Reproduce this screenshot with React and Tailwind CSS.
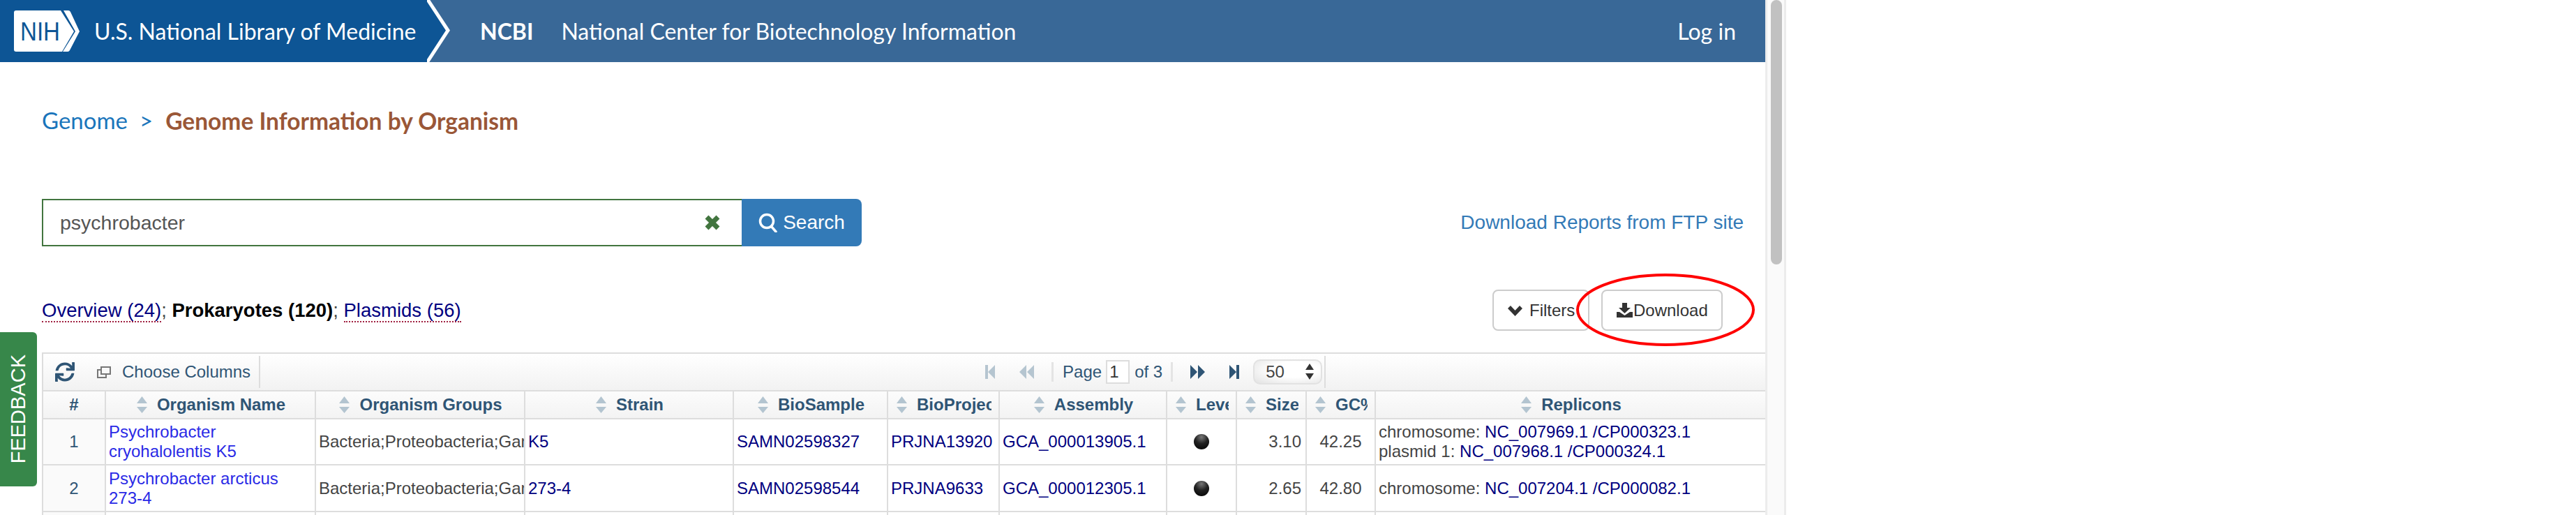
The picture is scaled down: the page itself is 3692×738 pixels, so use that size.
import React from "react";
import { FaSync } from "react-icons/fa";

const COLS =
  "grid grid-cols-[90px_301px_300px_299px_221px_160px_240px_100px_100px_99px_1fr]";

const headers = [
  "Organism Name",
  "Organism Groups",
  "Strain",
  "BioSample",
  "BioProject",
  "Assembly",
  "Level",
  "Size",
  "GC%",
  "Replicons",
];

const rows = [
  {
    n: 1,
    name: "Psychrobacter cryohalolentis K5",
    strain: "K5",
    sample: "SAMN02598327",
    project: "PRJNA13920",
    assembly: "GCA_000013905.1",
    size: "3.10",
    gc: "42.25",
    replicons: [
      ["chromosome:", "NC_007969.1", "CP000323.1"],
      ["plasmid 1:", "NC_007968.1", "CP000324.1"],
    ],
  },
  {
    n: 2,
    name: "Psychrobacter arcticus 273-4",
    strain: "273-4",
    sample: "SAMN02598544",
    project: "PRJNA9633",
    assembly: "GCA_000012305.1",
    size: "2.65",
    gc: "42.80",
    replicons: [["chromosome:", "NC_007204.1", "CP000082.1"]],
  },
];

// sort arrows in the table head
const SortIcon = () => (
  <svg width="15" height="24" viewBox="0 0 15 24" className="shrink-0 text-[#b3c4d0]" fill="currentColor">
    <path d="M7.5 0 15 10H0z" />
    <path d="M0 15h15l-7.5 9z" />
  </svg>
);

const PagerIcon = ({ d, width, className }) => (
  <svg width={width} height="20" viewBox={`0 0 ${width} 20`} className={className} fill="currentColor">
    <path d={d} />
  </svg>
);

const NihLogo = () => (
  <svg width="94" height="60" viewBox="0 0 94 60" className="shrink-0">
    <path d="M3 0H67L86 30 69 59H3Q0 59 0 56V3Q0 0 3 0Z" fill="#fff" />
    <path d="M71 0H78Q80 0 81 2L94 30 80 57Q79 59 77 59H70L88 30Z" fill="#fff" />
    <text x="9" y="43" textLength="57" lengthAdjust="spacingAndGlyphs" fontSize="36" fill="#0d5595" fontFamily="'Liberation Sans', sans-serif">
      NIH
    </text>
  </svg>
);

const Cell = ({ children, className = "" }) => (
  <div className={`border-r-2 border-[#ddd] px-1 flex items-center overflow-hidden min-w-0 ${className}`}>
    {children}
  </div>
);

const Row = ({ row, height }) => (
  <div className={`${COLS} ${height} border-b-2 border-[#ddd]`}>
    <Cell className="justify-center text-[#2f5575] bg-[#fafafa]">{row.n}</Cell>
    <Cell className="text-[#2a2ae6]">{row.name}</Cell>
    <Cell className="whitespace-nowrap text-[#444]">Bacteria;Proteobacteria;Gammaproteobacteria</Cell>
    <Cell className="text-[#000080]">{row.strain}</Cell>
    <Cell className="text-[#000080]">{row.sample}</Cell>
    <Cell className="text-[#000080]">{row.project}</Cell>
    <Cell className="text-[#000080]">{row.assembly}</Cell>
    <Cell className="justify-center">
      <span className="w-[22px] h-[22px] rounded-full bg-[radial-gradient(circle_at_50%_20%,#777_0%,#222_45%,#000_100%)]"></span>
    </Cell>
    <Cell className="justify-end text-[#444] pr-[6px]">{row.size}</Cell>
    <Cell className="justify-center text-[#444]">{row.gc}</Cell>
    <div className="px-1 flex flex-col justify-center text-[#444]">
      {row.replicons.map((r) => (
        <div key={r[1]} className="whitespace-nowrap">
          {r[0]} <span className="text-[#000080]">{r[1]} /{r[2]}</span>
        </div>
      ))}
    </div>
  </div>
);

export default function App() {
  return (
    <div className="relative flex h-[738px] overflow-hidden bg-white font-['Liberation_Sans',Arial,sans-serif]">
      <div className="w-[2530px] shrink-0">
        {/* NLM / NCBI banner */}
        <header className="flex h-[89px] bg-[#396897] text-white font-['Lato',sans-serif]">
          <div className="flex w-[612px] items-center bg-[#0d5595] pl-[20px]">
            <NihLogo />
            <span className="ml-[21px] whitespace-nowrap text-[32px]">U.S. National Library of Medicine</span>
          </div>
          <svg width="34" height="89" viewBox="0 0 34 89" className="shrink-0">
            <path d="M-1 0 30 43.5-1 89H-1Z" fill="#0d5595" />
            <path d="M0 -2 30 43.5 -1 91" fill="none" stroke="#fff" strokeWidth="5" />
          </svg>
          <div className="ml-[42px] flex flex-1 items-center text-[32px]">
            <span className="font-bold">NCBI</span>
            <span className="ml-[40px]">National Center for Biotechnology Information</span>
            <span className="ml-auto mr-[42px]">Log in</span>
          </div>
        </header>

        {/* breadcrumb */}
        <div className="mt-[64px] flex h-[40px] items-center pl-[60px] text-[33px] font-['Lato',sans-serif]">
          <span className="text-[#1a75bb]">Genome</span>
          <span className="ml-[17px] text-[#1a75bb]">&gt;</span>
          <span className="ml-[18px] text-[33.5px] font-bold text-[#9a5737]">Genome Information by Organism</span>
        </div>

        {/* search */}
        <div className="mt-[92px] flex items-center justify-between pl-[60px] pr-[31px]">
          <div className="flex h-[68px] w-[1175px]">
            <div className="flex flex-1 items-center border-2 border-r-0 border-[#42753f] pl-[24px] pr-[30px] text-[28.5px] text-[#555]">
              <span>psychrobacter</span>
              <svg width="24" height="24" viewBox="0 0 24 24" className="ml-auto">
                <path d="M4 4 20 20M20 4 4 20" stroke="#42753f" strokeWidth="7" />
              </svg>
            </div>
            <button className="flex w-[172px] items-center justify-center gap-[8px] rounded-r-lg bg-[#337ab7] text-[28px] text-white">
              <svg width="27" height="28" viewBox="0 0 27 28" fill="none" stroke="#fff" strokeWidth="3.5">
                <circle cx="12" cy="12" r="9.5" />
                <path d="M18.5 19.5 25 27" strokeLinecap="round" />
              </svg>
              Search
            </button>
          </div>
          <a className="text-[28px] text-[#337ab7]">Download Reports from FTP site</a>
        </div>

        {/* tabs and buttons */}
        <div className="mt-[62px] flex h-[59px] items-center pl-[60px] pr-[61px] text-[27.5px] text-[#444]">
          <span>
            <a className="border-b-2 border-dotted border-[#a02040] text-[#000080]">Overview (24)</a>;{" "}
            <b className="text-black">Prokaryotes (120)</b>;{" "}
            <a className="border-b-2 border-dotted border-[#a02040] text-[#000080]">Plasmids (56)</a>
          </span>
          <button className="ml-auto flex h-full w-[139px] items-center gap-[10px] rounded-lg border-2 border-[#ccc] pl-[20px] text-[24px] text-[#333]">
            <svg width="21" height="16" viewBox="0 0 21 16" fill="none" stroke="#333" strokeWidth="5.500">
              <path d="M2 3 10.500 12 19 3" />
            </svg>
            Filters
          </button>
          <button className="ml-[17px] flex h-full w-[174px] items-center rounded-lg border-2 border-[#ccc] pl-[20px] text-[24px] text-[#333]">
            <svg width="23" height="21" viewBox="0 0 23 21" fill="#333" className="mr-[1px]">
              <path d="M8 0h7v7h5l-8.500 8L3 7h5z" />
              <path d="M0 13h4l7.500 5 7.500-5h4v8H0z" />
            </svg>
            Download
          </button>
        </div>

        {/* genome table */}
        <div className="mt-[31px] ml-[60px] border-l-2 border-t-2 border-[#ddd] text-[24px] leading-[28px]">
          <div className="flex h-[54px] items-center border-b-2 border-[#ddd] bg-gradient-to-b from-[#fff] to-[#f2f2f2] text-[#2f5575]">
            <FaSync className="ml-[17px] h-[28px] w-[28px]" />
            <svg width="20" height="17" viewBox="0 0 20 17" className="ml-[32px] text-[#777]" fill="none" stroke="currentColor" strokeWidth="2">
              <rect x="6" y="1" width="13" height="10" />
              <path d="M5 5H1v11h12v-4" />
            </svg>
            <span className="ml-[16px]">Choose Columns</span>
            <span className="ml-[12px] h-[46px] w-[2px] bg-[#ddd]"></span>

            <PagerIcon width={14} d="M0 0h4v20H0zM14 0v20L4 10z" className="ml-[1039px] text-[#b5c5d0]" />
            <PagerIcon width={21} d="M10 0v20L0 10zM21 0v20L11 10z" className="ml-[35px] text-[#b5c5d0]" />
            <span className="ml-[25px] h-[28px] w-[3px] bg-[#e4e4e4]"></span>
            <span className="ml-[13px]">Page</span>
            <span className="ml-[6px] flex h-[34px] w-[34px] items-center border-2 border-[#ddd] bg-white pl-[3px] text-[#333]">1</span>
            <span className="ml-[7px]">of 3</span>
            <span className="ml-[12px] h-[28px] w-[3px] bg-[#e4e4e4]"></span>
            <PagerIcon width={21} d="M0 0v20l10-10zM11 0v20l10-10z" className="ml-[25px]" />
            <PagerIcon width={14} d="M0 0v20l10-10zM10 0h4v20h-4z" className="ml-[35px]" />
            <div className="ml-[20px] flex h-[36px] w-[99px] items-center rounded-[10px] border-2 border-[#e2e2e2] bg-[radial-gradient(ellipse_at_60%_40%,#fff_40%,#e2e2e2_100%)] pl-[16px] text-[#444]">
              50
              <svg width="14" height="24" viewBox="0 0 14 24" fill="#333" className="ml-auto mr-[9px]">
                <path d="M7 0l6 9H1zM1 14h12l-6 9z" />
              </svg>
            </div>
            <span className="ml-[3px] h-[46px] w-[2px] bg-[#ddd]"></span>
          </div>

          <div className={`${COLS} h-[40px] border-b-2 border-[#ddd] bg-gradient-to-b from-[#fcfcfc] to-[#f3f3f3] font-bold text-[#2f5575]`}>
            <Cell className="justify-center">#</Cell>
            {headers.map((h, i) => (
              <div key={h} className={`${i < headers.length - 1 ? "border-r-2 border-[#ddd]" : ""} flex min-w-0 items-center pl-[12px] pr-[10px]`}>
                <div className="flex min-w-0 flex-1 items-center [justify-content:safe_center] gap-[14px] overflow-hidden whitespace-nowrap">
                  <SortIcon />
                  <span className="shrink-0">{h}</span>
                </div>
              </div>
            ))}
          </div>

          <Row row={rows[0]} height="h-[66px]" />
          <Row row={rows[1]} height="h-[67px]" />
          <div className={`${COLS} h-[60px]`}>
            <Cell className="bg-[#fafafa]" />
            {headers.slice(0, -1).map((h) => (
              <Cell key={h} />
            ))}
          </div>
        </div>
      </div>

      {/* page scrollbar */}
      <div className="h-full w-[30px] shrink-0 border-x-[3px] border-[#ececec] bg-[#fafafa] pl-[5px]">
        <div className="h-[379px] w-[16px] rounded-b-lg rounded-t-lg bg-[#c1c1c1]"></div>
      </div>

      {/* feedback tab */}
      <div className="absolute left-0 top-[476px] flex h-[221px] w-[53px] items-center justify-center rounded-r-md bg-[#37874a] text-[29px] text-white">
        <span className="rotate-180 [writing-mode:vertical-rl]">FEEDBACK</span>
      </div>

      {/* red annotation round the Download button */}
      <svg width="260" height="108" viewBox="0 0 260 108" fill="none" className="absolute left-[2257px] top-[390px]">
        <ellipse cx="130" cy="54" rx="126" ry="50" stroke="#f00" strokeWidth="4" />
      </svg>
    </div>
  );
}
